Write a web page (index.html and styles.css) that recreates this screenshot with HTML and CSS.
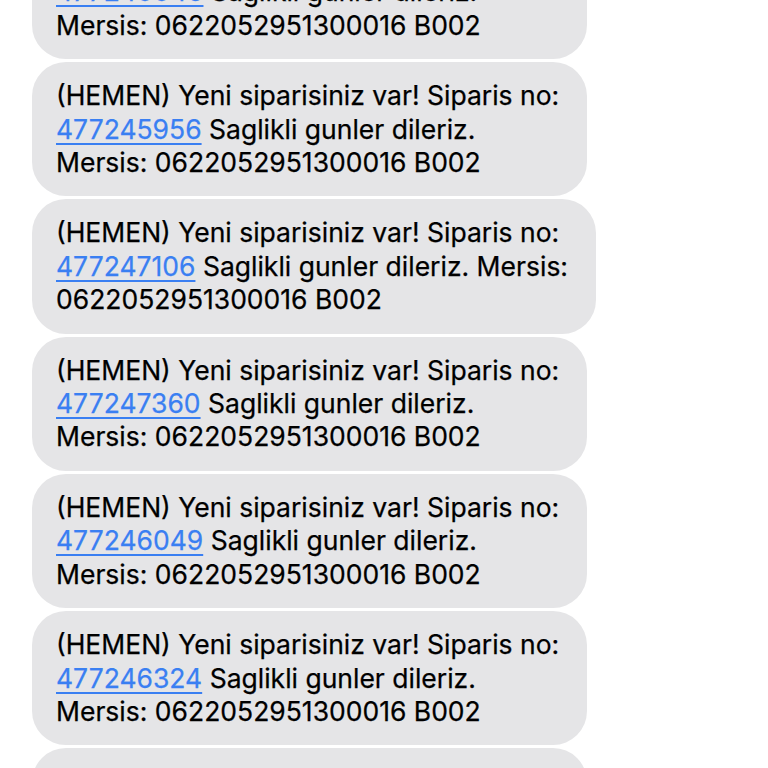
FILE: index.html
```html
<!DOCTYPE html>
<html lang="tr">
<head>
<meta charset="utf-8">
<title>Mesajlar</title>
<link rel="stylesheet" href="styles.css">
</head>
<body>
<div class="thread">
  <div class="bubble">
    <span class="line">(HEMEN) Yeni siparisiniz var! Siparis no:</span>
    <span class="line"><a class="num" href="#">477240046</a> Saglikli gunler dileriz.</span>
    <span class="line">Mersis: 0622052951300016 B002</span>
  </div>
  <div class="bubble">
    <span class="line">(HEMEN) Yeni siparisiniz var! Siparis no:</span>
    <span class="line"><a class="num" href="#">477245956</a> Saglikli gunler dileriz.</span>
    <span class="line">Mersis: 0622052951300016 B002</span>
  </div>
  <div class="bubble">
    <span class="line">(HEMEN) Yeni siparisiniz var! Siparis no:</span>
    <span class="line"><a class="num" href="#">477247106</a> Saglikli gunler dileriz. Mersis:</span>
    <span class="line">0622052951300016 B002</span>
  </div>
  <div class="bubble">
    <span class="line">(HEMEN) Yeni siparisiniz var! Siparis no:</span>
    <span class="line"><a class="num" href="#">477247360</a> Saglikli gunler dileriz.</span>
    <span class="line">Mersis: 0622052951300016 B002</span>
  </div>
  <div class="bubble">
    <span class="line">(HEMEN) Yeni siparisiniz var! Siparis no:</span>
    <span class="line"><a class="num" href="#">477246049</a> Saglikli gunler dileriz.</span>
    <span class="line">Mersis: 0622052951300016 B002</span>
  </div>
  <div class="bubble">
    <span class="line">(HEMEN) Yeni siparisiniz var! Siparis no:</span>
    <span class="line"><a class="num" href="#">477246324</a> Saglikli gunler dileriz.</span>
    <span class="line">Mersis: 0622052951300016 B002</span>
  </div>
  <div class="bubble">
    <span class="line">(HEMEN) Yeni siparisiniz var! Siparis no:</span>
    <span class="line"><a class="num" href="#">477246512</a> Saglikli gunler dileriz.</span>
    <span class="line">Mersis: 0622052951300016 B002</span>
  </div>
</div>
</body>
</html>
```
FILE: styles.css
```css
html, body {
  margin: 0;
  padding: 0;
  background: #ffffff;
  overflow: hidden;
}
.thread {
  display: flex;
  flex-direction: column;
  align-items: flex-start;
  gap: 3px;
  padding-left: 32px;
  margin-top: -75px;
  font-family: Inter, "Liberation Sans", sans-serif;
  font-size: 26.5px;
  line-height: 33.4px;
  color: #000000;
  -webkit-text-stroke: 0.25px #000;
}
.bubble {
  background: #e5e5e7;
  border-radius: 34px;
  padding: 17px 28px 17px 24px;
  white-space: nowrap;
}
.line {
  display: block;
}
.num {
  color: #3a7ff2;
  -webkit-text-stroke: 0.25px #3a7ff2;
  text-decoration: underline;
  text-decoration-thickness: 1.5px;
  text-underline-offset: 4px;
}
```
